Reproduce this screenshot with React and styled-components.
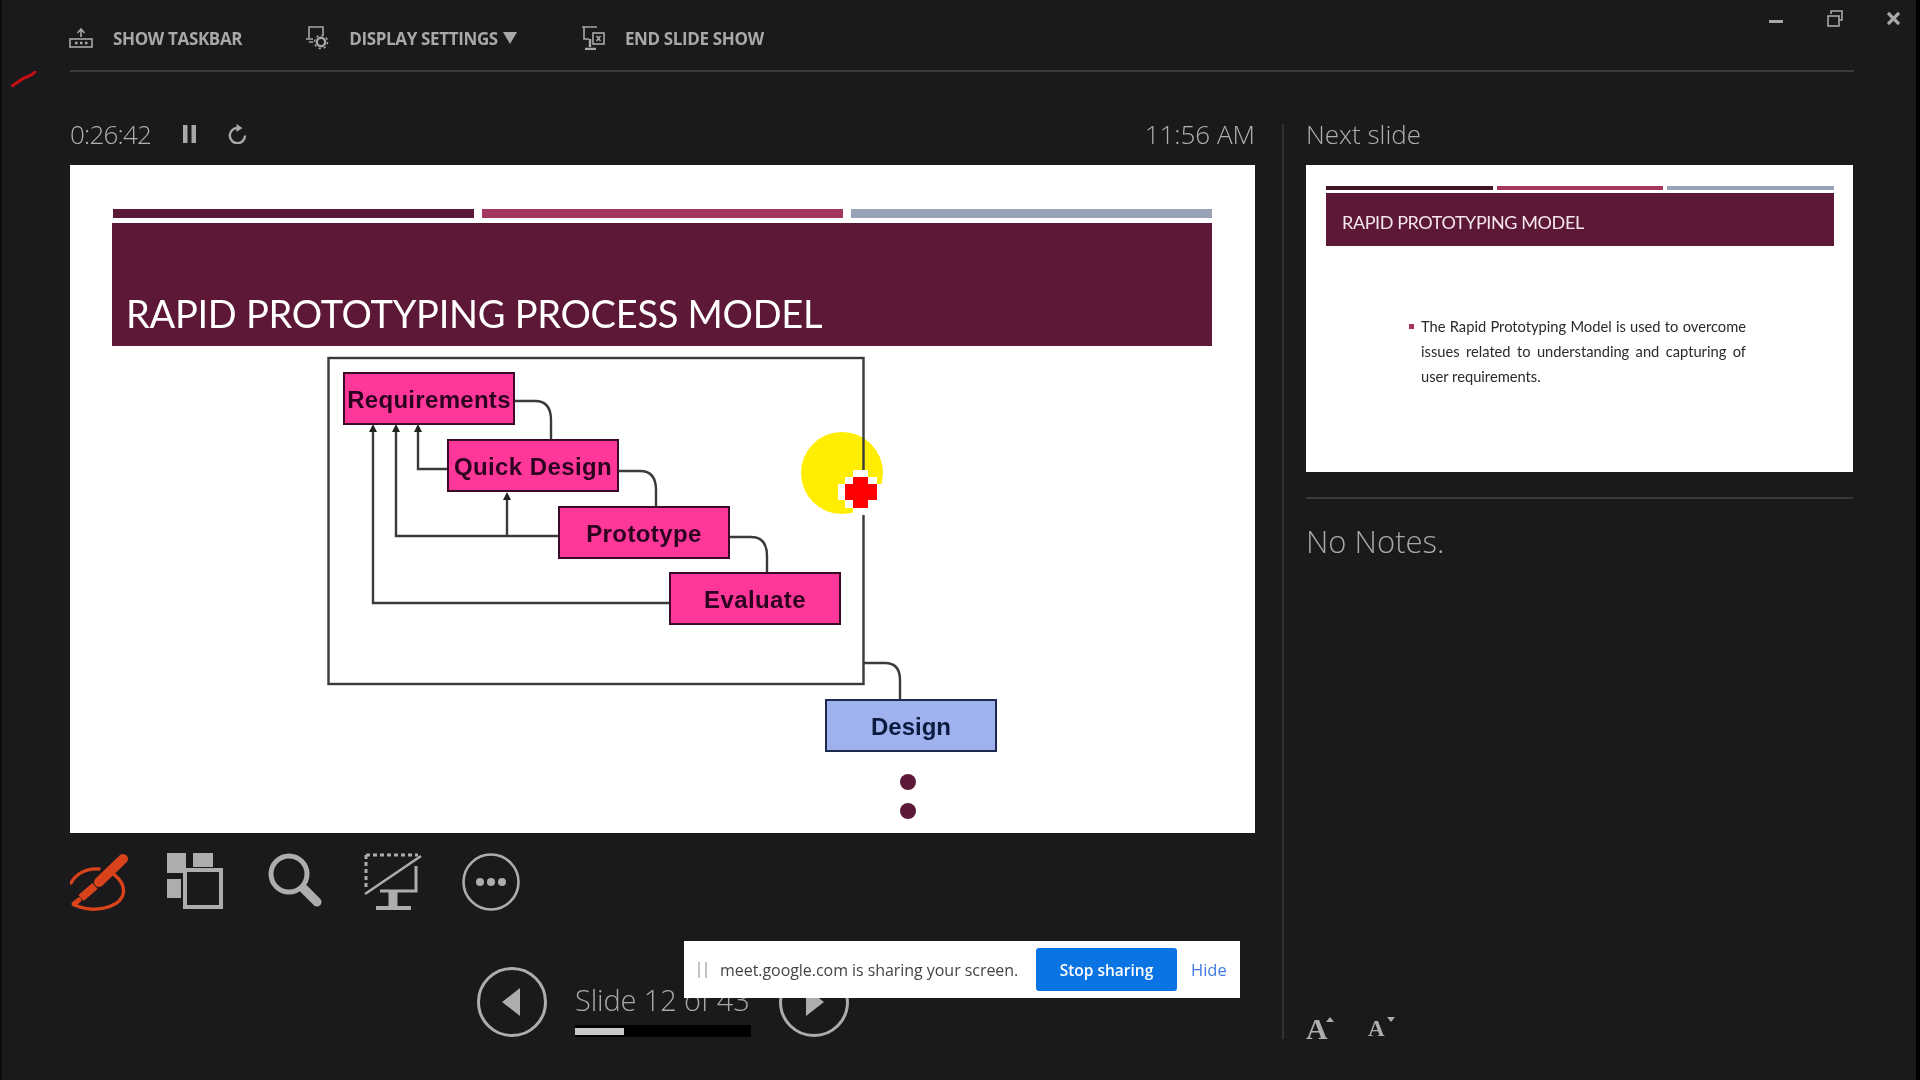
import styled, { createGlobalStyle } from "styled-components";

const GlobalStyle = createGlobalStyle`
  html, body {
    margin: 0;
    padding: 0;
    background: #1a1a1c;
  }
  * {
    box-sizing: border-box;
  }
`;

const grey = "#a8a8a8";

const nodes = [
  { label: "Requirements", x: 343, y: 372, spacing: "0.3px" },
  { label: "Quick Design", x: 447, y: 439, spacing: "0.4px" },
  { label: "Prototype", x: 558, y: 506, spacing: "0.4px" },
  { label: "Evaluate", x: 669, y: 572, spacing: "0.4px" },
  { label: "Design", x: 825, y: 699, blue: true },
];

const App = () => {
  return (
    <Page>
      <GlobalStyle />
      <InkMark viewBox="0 0 26 16">
        <path d="M1 15 L13 7 Q20 5 24 1" />
      </InkMark>

      <TopBar>
        <Tools>
          <ToolItem>
            <svg width="24" height="20" viewBox="0 0 24 20" fill="none" stroke={grey} strokeWidth="1.6">
              <rect x="1" y="11" width="22" height="8" />
              <path d="M12 9V2M8.5 5 12 1l3.5 4" />
              <path d="M6 15h2.5M11 15h2.5M16 15h2.5" strokeWidth="2.4" />
            </svg>
            <ToolLabel>SHOW TASKBAR</ToolLabel>
          </ToolItem>
          <ToolItem>
            <svg width="23" height="24" viewBox="0 0 23 24" fill="none" stroke={grey} strokeWidth="1.6">
              <path d="M3 12V1h14v8" />
              <path d="M0 13h7M3 16h4" />
              <circle cx="15" cy="16" r="4.2" strokeWidth="2.4" />
              <circle cx="15" cy="16" r="6.6" strokeWidth="1.4" strokeDasharray="2.4 2.8" />
            </svg>
            <ToolLabel>
              DISPLAY SETTINGS <Caret />
            </ToolLabel>
          </ToolItem>
          <ToolItem>
            <svg width="24" height="24" viewBox="0 0 24 24" fill="none" stroke={grey} strokeWidth="1.6">
              <path d="M1 1h15M3 1v12h5" />
              <rect x="12" y="7" width="11" height="11" />
              <path d="M15.5 10l4 5M19.5 10l-4 5" />
              <path d="M9 13v8M4 23h11" strokeWidth="2.4" />
            </svg>
            <ToolLabel>END SLIDE SHOW</ToolLabel>
          </ToolItem>
        </Tools>
        <WindowControls>
          <svg width="14" height="24" viewBox="0 0 14 24">
            <rect x="0" y="14" width="14" height="3" fill={grey} />
          </svg>
          <svg width="16" height="24" viewBox="0 0 16 24" fill="none" stroke={grey} strokeWidth="1.6">
            <rect x="1" y="13" width="11" height="10" transform="translate(0 -3)" />
            <path d="M4 10V7h11v9h-3" transform="translate(0 -2)" />
          </svg>
          <svg width="13" height="24" viewBox="0 0 13 24" stroke={grey} strokeWidth="3.2">
            <path d="M1 12l11 11M12 12 1 23" transform="translate(0 -5)" />
          </svg>
        </WindowControls>
      </TopBar>
      <TopRule />

      <Main>
        <LeftColumn>
          <StatusRow>
            <TimerGroup>
              <TimerText>0:26:42</TimerText>
              <svg width="13" height="18" viewBox="0 0 13 18" fill={grey}>
                <rect x="0" y="0" width="4.5" height="18" />
                <rect x="8.5" y="0" width="4.5" height="18" />
              </svg>
              <svg width="19" height="20" viewBox="0 0 19 20" fill="none" stroke={grey} strokeWidth="2.4">
                <path d="M17 11.5A7.6 7.6 0 1 1 9 4" />
                <path d="M8.5 0v8l6-4z" fill={grey} stroke="none" />
              </svg>
            </TimerGroup>
            <StatusText>11:56 AM</StatusText>
          </StatusRow>

          <Slide>
            <AccentBars>
              <AccentBar $color="#5b1a37" />
              <AccentBar $color="#a5365f" />
              <AccentBar $color="#98a3b5" />
            </AccentBars>
            <TitleBand>
              <SlideTitle>RAPID PROTOTYPING PROCESS MODEL</SlideTitle>
            </TitleBand>
            <Diagram>
              <DiagramLines viewBox="112 346 1100 486">
                <circle cx="842" cy="473" r="41" fill="#ffee00" stroke="none" />
                <rect x="328.5" y="358" width="535" height="326" />
                <path d="M514 401H535Q551 401 551 420V439" />
                <path d="M618 471H640Q656 471 656 490V506" />
                <path d="M730 537H751Q767 537 767 556V572" />
                <path d="M863 663H885Q900 663 900 680V699" />
                <path d="M447 469H418V428" />
                <path d="M558 536H396V428" />
                <path d="M507 536V496" />
                <path d="M669 603H373V428" />
                <g fill="#222" stroke="none">
                  <path d="M418 424l-4 8h8z" />
                  <path d="M396 424l-4 8h8z" />
                  <path d="M373 424l-4 8h8z" />
                  <path d="M507 492l-4 8h8z" />
                </g>
                <g fill="#fff" stroke="none">
                  <rect x="853" y="470" width="15" height="45" />
                  <rect x="838" y="484" width="46" height="16" />
                  <rect x="845" y="477" width="32" height="31" />
                </g>
                <g fill="#ff0000" stroke="none">
                  <rect x="853" y="477" width="15" height="31" />
                  <rect x="845" y="484" width="32" height="16" />
                </g>
                <circle cx="908" cy="782" r="8" fill="#5c1a38" stroke="none" />
                <circle cx="908" cy="811" r="8" fill="#5c1a38" stroke="none" />
              </DiagramLines>
              {nodes.map((node) => (
                <FlowNode
                  key={node.label}
                  $x={node.x - 112}
                  $y={node.y - 346}
                  $blue={node.blue}
                  $spacing={node.spacing}
                >
                  {node.label}
                </FlowNode>
              ))}
            </Diagram>
          </Slide>

          <PresenterTools>
            <svg width="58" height="59" viewBox="0 0 58 59" fill="none">
              <path d="M29 16C15 15 5 22 1 30" stroke="#d9431c" strokeWidth="3.4" strokeLinecap="round" />
              <path d="M42 20C52 27 56 36 52 44C47 54 24 61 5 52" stroke="#d9431c" strokeWidth="3.4" strokeLinecap="round" />
              <path d="M53 6 29 29" stroke="#d9431c" strokeWidth="10" strokeLinecap="round" />
              <path d="M25 33 11 45" stroke="#d9431c" strokeWidth="8" />
              <path d="M9 47 4 51" stroke="#d9431c" strokeWidth="5" strokeLinecap="round" />
            </svg>
            <svg width="58" height="58" viewBox="0 0 58 58" fill="none">
              <rect x="0" y="0" width="19" height="20" fill="#adadad" />
              <rect x="26" y="0" width="20" height="14" fill="#adadad" />
              <rect x="0" y="26" width="14" height="19" fill="#adadad" />
              <rect x="18" y="17" width="36" height="37" stroke="#adadad" strokeWidth="4" />
            </svg>
            <svg width="54" height="54" viewBox="0 0 54 54" fill="none" stroke="#adadad">
              <circle cx="21" cy="21" r="18" strokeWidth="5" />
              <path d="M36 36 49 49" strokeWidth="9" strokeLinecap="round" />
            </svg>
            <svg width="58" height="58" viewBox="0 0 58 58" fill="none" stroke="#adadad">
              <path d="M2 2H54M2 2V36" strokeWidth="3" strokeDasharray="4 3" />
              <path d="M1 41 57 3" strokeWidth="2.6" />
              <path d="M52 13V38H16" strokeWidth="3" />
              <path d="M29 38V54" strokeWidth="9" />
              <path d="M12 55H47" strokeWidth="4" />
            </svg>
            <svg width="58" height="58" viewBox="0 0 58 58" fill="#adadad">
              <circle cx="29" cy="29" r="27.5" fill="none" stroke="#adadad" strokeWidth="2.6" />
              <circle cx="18" cy="29" r="4" />
              <circle cx="29" cy="29" r="4" />
              <circle cx="40" cy="29" r="4" />
            </svg>
          </PresenterTools>

          <NavRow>
            <NavCircle>
              <svg width="20" height="28" viewBox="0 0 20 28" fill="#adadad">
                <path d="M18 0V28L0 14z" />
              </svg>
            </NavCircle>
            <SlideCounter>
              <CounterText>Slide 12 of 43</CounterText>
              <ProgressTrack>
                <ProgressFill style={{ width: `${(12 / 43) * 100}%` }} />
              </ProgressTrack>
            </SlideCounter>
            <NavCircle>
              <svg width="20" height="28" viewBox="0 0 20 28" fill="#adadad">
                <path d="M2 0V28L20 14z" />
              </svg>
            </NavCircle>
          </NavRow>
        </LeftColumn>

        <VerticalDivider />

        <RightColumn>
          <StatusRow>
            <StatusText>Next slide</StatusText>
          </StatusRow>
          <Preview>
            <PreviewBars>
              <AccentBar $color="#431427" />
              <AccentBar $color="#a5365f" />
              <AccentBar $color="#98a3b5" />
            </PreviewBars>
            <PreviewBand>RAPID PROTOTYPING MODEL</PreviewBand>
            <PreviewBody>
              <PreviewBullet />
              <PreviewText>
                The Rapid Prototyping Model is used to overcome issues related to understanding and capturing of user
                requirements.
              </PreviewText>
            </PreviewBody>
          </Preview>
          <NotesRule />
          <Notes>No Notes.</Notes>
          <FontControls>
            <FontButton $big>
              A<FontArrow />
            </FontButton>
            <FontButton>
              A<FontArrow $down />
            </FontButton>
          </FontControls>
        </RightColumn>
      </Main>

      <ShareBar>
        <ShareGrip />
        <ShareText>meet.google.com is sharing your screen.</ShareText>
        <StopButton>Stop sharing</StopButton>
        <HideLink>Hide</HideLink>
      </ShareBar>
    </Page>
  );
};

export default App;

const Page = styled.div`
  position: relative;
  width: 1920px;
  height: 1080px;
  overflow: hidden;
  background: #1a1a1c;
  box-shadow: inset -4px 0 0 #000, inset 2px 0 0 #0c0c0c;
  color: #a8a8a8;
  font-family: "Open Sans", sans-serif;
  filter: blur(0.5px);
`;

const InkMark = styled.svg`
  position: absolute;
  left: 11px;
  top: 71px;
  width: 26px;
  height: 16px;
  fill: none;
  stroke: #c40f14;
  stroke-width: 3;
  stroke-linecap: round;
`;

const TopBar = styled.div`
  display: flex;
  justify-content: space-between;
  height: 70px;
  padding: 0 20px 0 69px;
`;

const Tools = styled.div`
  display: flex;
  align-items: center;
  gap: 64px;
  height: 76px;
`;

const ToolItem = styled.div`
  display: flex;
  align-items: center;
  gap: 20px;
`;

const ToolLabel = styled.span`
  display: flex;
  align-items: center;
  gap: 5px;
  font-size: 17px;
  font-weight: 700;
  letter-spacing: -0.35px;
  color: #a8a8a8;
  white-space: nowrap;
`;

const Caret = styled.i`
  width: 0;
  height: 0;
  border-left: 7px solid transparent;
  border-right: 7px solid transparent;
  border-top: 12px solid #a8a8a8;
`;

const WindowControls = styled.div`
  display: flex;
  align-items: flex-start;
  gap: 44px;
  padding-top: 6px;
`;

const TopRule = styled.div`
  height: 2px;
  margin: 0 66px 0 70px;
  background: #3c3c3e;
`;

const Main = styled.div`
  display: flex;
  padding-left: 70px;
`;

const LeftColumn = styled.div`
  width: 1185px;
  flex-shrink: 0;
`;

const StatusRow = styled.div`
  display: flex;
  justify-content: space-between;
  height: 93px;
  padding-top: 44px;
`;

const TimerGroup = styled.div`
  display: flex;
  align-items: center;
  height: 36px;
  gap: 32px;
`;

const StatusText = styled.span`
  font-size: 26px;
  line-height: 36px;
  font-weight: 300;
  color: #b0b0b0;
`;

const TimerText = styled(StatusText)`
  display: block;
  width: 81px;
  letter-spacing: -0.8px;
  white-space: nowrap;
`;

const Slide = styled.div`
  display: flex;
  flex-direction: column;
  height: 668px;
  padding: 44px 43px 0 42px;
  background: #fff;
`;

const AccentBars = styled.div`
  display: flex;
  gap: 8px;
  height: 9px;
  padding-left: 1px;
`;

const AccentBar = styled.div`
  flex: 1;
  background: ${(props) => props.$color};
`;

const TitleBand = styled.div`
  display: flex;
  align-items: flex-end;
  height: 123px;
  margin-top: 5px;
  padding: 0 0 10px 14px;
  background: #5c1836;
`;

const SlideTitle = styled.h1`
  margin: 0;
  font-family: Lato, sans-serif;
  font-size: 38px;
  line-height: 46px;
  font-weight: 400;
  letter-spacing: -0.28px;
  color: #fff;
  white-space: nowrap;
`;

const Diagram = styled.div`
  position: relative;
  flex: 1;
`;

const DiagramLines = styled.svg`
  position: absolute;
  left: 0;
  top: 0;
  width: 1100px;
  height: 486px;
  overflow: visible;
  fill: none;
  stroke: #3a3a3a;
  stroke-width: 2.4;
`;

const FlowNode = styled.div`
  position: absolute;
  left: ${(props) => props.$x}px;
  top: ${(props) => props.$y}px;
  display: flex;
  align-items: center;
  justify-content: center;
  width: 172px;
  height: 53px;
  padding-top: 2px;
  border: 2px solid ${(props) => (props.$blue ? "#1c2a52" : "#3a0a28")};
  background: ${(props) => (props.$blue ? "#a0b2ee" : "#ff3798")};
  color: ${(props) => (props.$blue ? "#0d1a40" : "#2c0320")};
  font-family: "Liberation Sans", Arial, sans-serif;
  font-size: 24px;
  font-weight: 700;
  letter-spacing: ${(props) => props.$spacing || "0"};
  white-space: nowrap;
`;

const PresenterTools = styled.div`
  display: grid;
  grid-template-columns: 97px 101px 96px 98px 58px;
  align-items: start;
  height: 59px;
  margin-top: 20px;
`;

const NavRow = styled.div`
  display: flex;
  align-items: flex-start;
  gap: 28px;
  margin-top: 55px;
  margin-left: 407px;
`;

const NavCircle = styled.div`
  display: flex;
  align-items: center;
  justify-content: center;
  width: 70px;
  height: 70px;
  border: 3px solid #adadad;
  border-radius: 50%;
`;

const SlideCounter = styled.div`
  display: flex;
  flex-direction: column;
  width: 176px;
  padding-top: 13px;
`;

const CounterText = styled.span`
  font-size: 29px;
  line-height: 40px;
  font-weight: 300;
  letter-spacing: -0.15px;
  color: #a8a8a8;
  white-space: nowrap;
`;

const ProgressTrack = styled.div`
  display: flex;
  align-items: center;
  height: 12px;
  margin-top: 5px;
  background: #000;
`;

const ProgressFill = styled.div`
  height: 7px;
  background: #c8c8c8;
`;

const VerticalDivider = styled.div`
  width: 2px;
  height: 915px;
  margin: 52px 22px 0 27px;
  background: #323234;
`;

const RightColumn = styled.div`
  position: relative;
  display: flex;
  flex-direction: column;
  width: 547px;
`;

const Preview = styled.div`
  display: flex;
  flex-direction: column;
  height: 307px;
  padding: 21px 19px 0 20px;
  background: #fff;
`;

const PreviewBars = styled.div`
  display: flex;
  gap: 4px;
  height: 4px;
`;

const PreviewBand = styled.div`
  display: flex;
  align-items: center;
  height: 53px;
  margin-top: 3px;
  padding: 4px 0 0 16px;
  background: #5c1836;
  color: #f5e6ec;
  font-family: Lato, sans-serif;
  font-size: 18px;
  letter-spacing: -0.4px;
`;

const PreviewBody = styled.div`
  display: flex;
  gap: 7px;
  margin-top: 68px;
  padding-left: 83px;
`;

const PreviewBullet = styled.i`
  flex-shrink: 0;
  width: 5px;
  height: 5px;
  margin-top: 10px;
  background: #a5365f;
`;

const PreviewText = styled.p`
  width: 325px;
  margin: 0;
  font-family: Lato, sans-serif;
  font-size: 14.7px;
  line-height: 25px;
  text-align: justify;
  color: #2a2a2a;
`;

const NotesRule = styled.div`
  height: 2px;
  margin-top: 25px;
  background: #3a3a3c;
`;

const Notes = styled.div`
  margin-top: 21px;
  font-size: 31px;
  line-height: 42px;
  font-weight: 300;
  color: #a8a8a8;
`;

const FontControls = styled.div`
  display: flex;
  align-items: flex-end;
  gap: 36px;
  margin-top: 456px;
  height: 22px;
`;

const FontButton = styled.div`
  position: relative;
  width: 26px;
  color: #adadad;
  font-family: "Liberation Serif", serif;
  font-weight: 700;
  font-size: ${(props) => (props.$big ? "30px" : "23px")};
  line-height: 22px;
`;

const FontArrow = styled.i`
  position: absolute;
  right: ${(props) => (props.$down ? "-1px" : "-2px")};
  top: -1px;
  width: 0;
  height: 0;
  border-left: 4px solid transparent;
  border-right: 4px solid transparent;
  ${(props) =>
    props.$down ? "border-top: 5px solid #adadad;" : "border-bottom: 5px solid #adadad;"}
`;

const ShareBar = styled.div`
  position: absolute;
  left: 684px;
  top: 941px;
  display: flex;
  align-items: center;
  width: 556px;
  height: 57px;
  padding-left: 14px;
  background: #fff;
`;

const ShareGrip = styled.i`
  width: 9px;
  height: 16px;
  border-left: 2px solid #c4c4c4;
  border-right: 2px solid #c4c4c4;
`;

const ShareText = styled.span`
  margin-left: 13px;
  font-family: "Open Sans", sans-serif;
  font-size: 16px;
  letter-spacing: -0.05px;
  color: #444;
  white-space: nowrap;
`;

const StopButton = styled.button`
  position: absolute;
  left: 352px;
  top: 7px;
  width: 141px;
  height: 43px;
  border: none;
  border-radius: 3px;
  background: #0a74e4;
  color: #fff;
  font-family: "Open Sans", sans-serif;
  font-size: 15.5px;
  font-weight: 600;
`;

const HideLink = styled.span`
  position: absolute;
  left: 507px;
  color: #3f7be6;
  font-size: 16.5px;
`;
